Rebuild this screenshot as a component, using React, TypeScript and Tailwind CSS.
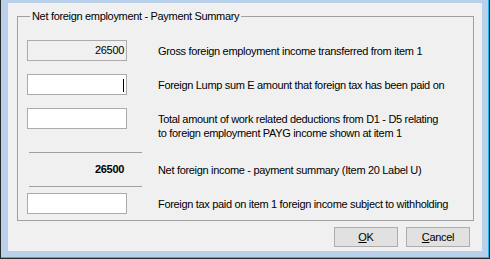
import React from "react";

const rows = {
  gross: "Gross foreign employment income transferred from item 1",
  lump: "Foreign Lump sum E amount that foreign tax has been paid on",
  deductions: [
    "Total amount of work related deductions from D1 - D5 relating",
    "to foreign employment PAYG income shown at item 1",
  ],
  net: "Net foreign income - payment summary (Item 20 Label U)",
  tax: "Foreign tax paid on item 1 foreign income subject to withholding",
};

const Box: React.FC<{ value?: string; readOnly?: boolean; caret?: boolean }> = ({ value, readOnly, caret }) => (
  <div
    className={`relative w-[100px] h-[21px] border border-[#ababab] flex items-center justify-end pr-[2px] shrink-0 ${
      readOnly ? "bg-[#f0f0f0]" : "bg-white"
    }`}
  >
    {value}
    {caret && <span className="absolute right-[2px] top-[4px] w-px h-[13px] bg-black" />}
  </div>
);

const Label: React.FC<{ children: React.ReactNode }> = ({ children }) => (
  <div className="ml-[31px] leading-[14px] whitespace-nowrap">{children}</div>
);

export default function App() {
  return (
    <div
      className="w-[490px] h-[259px] bg-[#2a2a2a] pl-px pr-px pb-px text-[11px] tracking-[-0.32px] text-black"
      style={{ fontFamily: '"Liberation Sans", Arial, sans-serif' }}
    >
      <div className="w-full h-full bg-[#b9d1ea] border-r border-b border-[#28b4e6] pl-[7px] pt-[3px] pr-[6px] pb-[6px]">
        <div className="w-full h-full bg-[#f0f0f0] flex flex-col">
          <div className="relative ml-[9px] mt-[13px] w-[457px] h-[205px] border border-[#a0a0a0] pl-[9px] pt-[23px] flex flex-col">
            <div className="absolute left-[12px] -top-[8px] px-[2px] bg-[#f0f0f0] leading-[14px]">
              Net foreign employment - Payment Summary
            </div>

            <div className="flex items-center h-[21px]">
              <Box value="26500" readOnly />
              <Label>{rows.gross}</Label>
            </div>

            <div className="flex items-center h-[21px] mt-[13px]">
              <Box caret />
              <Label>{rows.lump}</Label>
            </div>

            <div className="flex items-start h-[21px] mt-[13px]">
              <Box />
              <div className="mt-[4px]">
                <Label>
                  {rows.deductions[0]}
                  <br />
                  {rows.deductions[1]}
                </Label>
              </div>
            </div>

            <div className="ml-[2px] mt-[23px] w-[113px] h-px bg-[#a0a0a0]" />
            <div className="flex items-center h-[33px]">
              <div className="w-[100px] text-right pr-[3px] font-bold shrink-0">26500</div>
              <Label>{rows.net}</Label>
            </div>
            <div className="ml-[2px] w-[113px] h-px bg-[#a0a0a0]" />

            <div className="flex items-center h-[21px] mt-[6px]">
              <Box />
              <Label>{rows.tax}</Label>
            </div>
          </div>

          <div className="flex justify-end gap-[8px] pr-[12px] mt-[6px]">
            <button className="w-[64px] h-[20px] border border-[#adadad] bg-[#e1e1e1] leading-none">
              <span className="underline">O</span>K
            </button>
            <button className="w-[64px] h-[20px] border border-[#adadad] bg-[#e1e1e1] leading-none">
              <span className="underline">C</span>ancel
            </button>
          </div>
        </div>
      </div>
    </div>
  );
}
